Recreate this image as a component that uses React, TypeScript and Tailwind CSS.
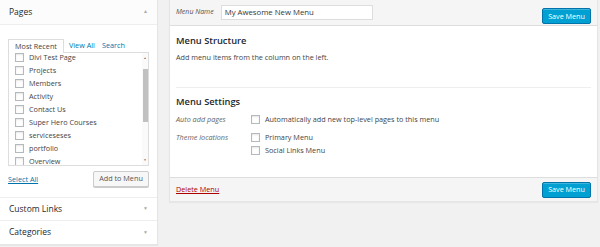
const pages = [
  'Divi Test Page',
  'Projects',
  'Members',
  'Activity',
  'Contact Us',
  'Super Hero Courses',
  'serviceseses',
  'portfolio',
  'Overview',
];

function Check() {
  return <span className="block w-[9px] h-[9px] shrink-0 border border-[#b4b9be] bg-white shadow-[inset_0_1px_2px_rgba(0,0,0,0.1)]" />;
}

function SaveButton() {
  return (
    <button className="h-[16px] w-[49px] rounded-[2px] border border-[#0073aa] bg-[#00a0d2] text-white text-[7.2px] leading-none shadow-[inset_0_1px_0_rgba(120,200,230,0.5)]">
      Save Menu
    </button>
  );
}

export default function App() {
  return (
    <div className="w-[600px] h-[247px] bg-[#f1f1f1] flex items-start overflow-hidden text-[#444] font-['Open_Sans',sans-serif]">
      {/* Left column: add items */}
      <div className="w-[158px] bg-white border-r border-b border-[#e5e5e5] shadow-[0_1px_1px_rgba(0,0,0,0.04)]">
        <div className="h-[25px] px-[9px] flex items-center justify-between bg-[#fcfcfc] border-b border-[#eee]">
          <span className="text-[8.5px] text-[#23282d]">Pages</span>
          <span className="text-[5px] text-[#aaa]">▲</span>
        </div>
        <div className="px-[8px] pt-[13px]">
          <div className="flex items-end text-[7.25px] h-[14px]">
            <span className="h-[14px] px-[6px] flex items-center border border-b-0 border-[#ddd] bg-white text-[#444] relative top-[1px]">Most Recent</span>
            <span className="ml-[5px] h-[14px] flex items-center text-[#0073aa]">View All</span>
            <span className="ml-[7px] h-[14px] flex items-center text-[#0073aa]">Search</span>
          </div>
          <div className="h-[114px] border border-[#ddd] flex overflow-hidden">
            <div className="flex-1 overflow-hidden">
              <div className="-mt-[2px] pl-[6px]">
                {pages.map((p) => (
                  <div key={p} className="h-[13px] flex items-center gap-[5px] text-[7.25px] text-[#444]">
                    <Check />
                    <span>{p}</span>
                  </div>
                ))}
              </div>
            </div>
            <div className="w-[6px] flex flex-col items-center bg-[#fafafa]">
              <span className="text-[3px] text-[#666] h-[10px] flex items-center">▲</span>
              <div className="w-[5px] h-[53px] mt-[6px] bg-[#c1c1c1]" />
              <div className="flex-1" />
              <span className="text-[3px] text-[#666] h-[10px] flex items-center">▼</span>
            </div>
          </div>
          <div className="mt-[5px] h-[16px] flex items-center justify-between">
            <span className="text-[7.25px] text-[#0073aa] underline">Select All</span>
            <button className="h-[16px] w-[56px] rounded-[2px] border border-[#ccc] bg-[#f7f7f7] text-[7.25px] text-[#555] leading-none shadow-[0_1px_0_#ccc]">
              Add to Menu
            </button>
          </div>
        </div>
        <div className="mt-[10px] border-t border-[#eee]">
          {['Custom Links', 'Categories'].map((t, i) => (
            <div key={t} className={`h-[23px] px-[9px] flex items-center justify-between ${i === 0 ? 'border-b border-[#eee]' : ''}`}>
              <span className="text-[8.5px] text-[#23282d]">{t}</span>
              <span className="text-[5px] text-[#aaa]">▼</span>
            </div>
          ))}
        </div>
      </div>

      {/* Right column: menu editor */}
      <div className="ml-[11px] w-[429px] bg-white border border-t-0 border-[#e5e5e5] shadow-[0_1px_1px_rgba(0,0,0,0.04)]">
        <div className="h-[26px] px-[6px] flex items-center bg-[#f5f5f5] border-b border-[#ddd]">
          <span className="text-[7px] italic text-[#555]">Menu Name</span>
          <div className="ml-[7px] w-[152px] h-[15px] px-[3px] flex items-center bg-white border border-[#ddd] text-[7.75px] text-[#32373c]">
            My Awesome New Menu
          </div>
          <div className="ml-auto">
            <SaveButton />
          </div>
        </div>
        <div className="px-[6px]">
          <div className="mt-[8px] text-[9.3px] leading-[14px] font-semibold text-[#23282d]">Menu Structure</div>
          <div className="mt-[4px] text-[7.25px] leading-[10px]">Add menu items from the column on the left.</div>
          <div className="mt-[25px] border-t border-[#eee]" />
          <div className="mt-[7px] text-[9.3px] leading-[14px] font-semibold text-[#23282d]">Menu Settings</div>
          <div className="mt-[4px] flex text-[7.25px]">
            <div className="w-[75px] h-[13px] flex items-center italic text-[#666]">Auto add pages</div>
            <div className="h-[13px] flex items-center gap-[5px]">
              <Check />
              <span>Automatically add new top-level pages to this menu</span>
            </div>
          </div>
          <div className="mt-[5px] flex text-[7.25px]">
            <div className="w-[75px] h-[13px] flex items-center italic text-[#666]">Theme locations</div>
            <div className="flex flex-col">
              <div className="h-[13px] flex items-center gap-[5px]">
                <Check />
                <span>Primary Menu</span>
              </div>
              <div className="h-[13px] flex items-center gap-[5px]">
                <Check />
                <span>Social Links Menu</span>
              </div>
            </div>
          </div>
        </div>
        <div className="mt-[20px] h-[24px] px-[6px] flex items-center justify-between bg-[#f5f5f5] border-t border-[#ddd]">
          <span className="text-[7.25px] text-[#a00] underline">Delete Menu</span>
          <SaveButton />
        </div>
      </div>
    </div>
  );
}
